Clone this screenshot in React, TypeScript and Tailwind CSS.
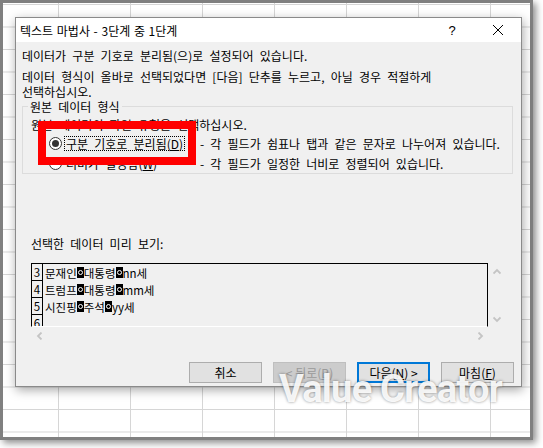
import React from 'react';

const KR = "font-['Noto_Sans_CJK_KR','Noto_Sans_CJK_SC',sans-serif]";

const ROWS: { n: string; parts: string[] }[] = [
  { n: '3', parts: ['문재인', '대통령', 'nn세'] },
  { n: '4', parts: ['트럼프', '대통령', 'mm세'] },
  { n: '5', parts: ['시진핑', '주석', 'yy세'] },
  { n: '6', parts: [] },
];

function Chevron({ dir }: { dir: 'up' | 'down' | 'left' | 'right' }) {
  const pts = {
    up: '0.5,5.5 4,2 7.5,5.5',
    down: '0.5,2.5 4,6 7.5,2.5',
    left: '5.5,0.5 2,4 5.5,7.5',
    right: '2.5,0.5 6,4 2.5,7.5',
  }[dir];
  return (
    <svg width="8" height="8" viewBox="0 0 8 8">
      <polyline points={pts} fill="none" stroke="#c4c4c4" strokeWidth="1.8" />
    </svg>
  );
}

// tab character shown as an inverse box
function Tab() {
  return (
    <span className="inline-flex items-center justify-center w-[7px] h-[11px] bg-black">
      <span className="w-[5px] h-[5px] rounded-full border border-white" />
    </span>
  );
}

function Radio({ checked }: { checked?: boolean }) {
  return (
    <span className="w-[13px] h-[13px] shrink-0 rounded-full border border-[#333333] bg-white flex items-center justify-center">
      {checked && <span className="w-[7px] h-[7px] rounded-full bg-[#333333]" />}
    </span>
  );
}

export default function App() {
  return (
    <div className={`relative w-[543px] h-[448px] overflow-hidden bg-white ${KR} text-[12px] leading-[15px] text-black`}>
      {/* spreadsheet behind the dialog */}
      <div className="w-[533px] h-[440px] border-[3px] border-[#808080] shadow-[3px_3px_7px_rgba(0,0,0,0.45)] bg-white [background-image:linear-gradient(to_right,#d6d6d6_1px,transparent_1px),linear-gradient(to_bottom,#d6d6d6_1px,transparent_1px)] [background-size:72px_22.5px] [background-position:55px_1px] pl-[12px] pt-[14px]">
        <div className="w-[507px] h-[370px] flex flex-col border border-[#8a8a8a] bg-[#f0f0f0] shadow-[1px_3px_10px_rgba(0,0,0,0.35)]">
          <div className="h-[24px] shrink-0 flex items-center bg-white">
            <span className="pl-[4px] flex-1 [word-spacing:1px]">텍스트 마법사 - 3단계 중 1단계</span>
            <span className="w-[46px] text-center text-[13px] font-['Liberation_Sans',sans-serif]">?</span>
            <span className="w-[46px] flex justify-center">
              <svg width="10" height="10" viewBox="0 0 10 10">
                <path d="M0 0L10 10M10 0L0 10" stroke="#000" strokeWidth="1" />
              </svg>
            </span>
          </div>

          <div className="flex-1 flex flex-col pl-[6px] pt-[6px] [word-spacing:3.5px]">
            <p>데이터가 구분 기호로 분리됨(으)로 설정되어 있습니다.</p>
            <p className="mt-[6px]">
              데이터 형식이 올바로 선택되었다면 [다음] 단추를 누르고, 아닐 경우 적절하게
              <br />
              선택하십시오.
            </p>

            <fieldset className="w-[491px] min-w-0 border border-[#dcdcdc]">
              <legend className="ml-[5px] px-[2px]">원본 데이터 형식</legend>
              <p className="mt-[3px] pl-[8px]">원본 데이터의 파일 유형을 선택하십시오.</p>
              <div className="mt-[1px] pl-[26px] flex flex-col">
                <div className="h-[20px] flex items-center">
                  <Radio checked />
                  <span className="w-[138px] shrink-0 pl-[2px]">
                    <span className="inline-block border border-dotted border-black px-[1px] leading-[13px]">
                      구분 기호로 분리됨(<span className="underline underline-offset-1">D</span>)
                    </span>
                  </span>
                  <span>- 각 필드가 쉼표나 탭과 같은 문자로 나누어져 있습니다.</span>
                </div>
                <div className="h-[20px] flex items-center">
                  <Radio />
                  <span className="w-[138px] shrink-0 pl-[2px]">
                    <span className="inline-block border border-transparent px-[1px] leading-[13px]">
                      너비가 일정함(<span className="underline underline-offset-1">W</span>)
                    </span>
                  </span>
                  <span>- 각 필드가 일정한 너비로 정렬되어 있습니다.</span>
                </div>
              </div>
            </fieldset>

            <p className="mt-[62px] pl-[9px]">선택한 데이터 미리 보기:</p>

            <div className="mt-[12px] ml-[9px] flex [word-spacing:0px]">
              <div className="flex flex-col">
                <div className="w-[457px] h-[64px] overflow-hidden border-t border-l border-r border-black border-b border-b-white text-[11.5px] leading-[16px]">
                  {ROWS.map(r => (
                    <div key={r.n} className="h-[17px] flex">
                      <div className="w-[11px] shrink-0 border-r border-b border-black text-center">{r.n}</div>
                      {r.parts.length > 0 && (
                        <div className="pl-[2px] flex items-center">
                          <span>{r.parts[0]}</span>
                          <Tab />
                          <span>{r.parts[1]}</span>
                          <Tab />
                          <span>{r.parts[2]}</span>
                        </div>
                      )}
                    </div>
                  ))}
                </div>
                <div className="h-[17px] flex justify-between">
                  <span className="w-[17px] flex items-center justify-center"><Chevron dir="left" /></span>
                  <span className="w-[17px] flex items-center justify-center"><Chevron dir="right" /></span>
                </div>
              </div>
              <div className="w-[17px] h-[64px] flex flex-col justify-between">
                <span className="h-[17px] flex items-center justify-center"><Chevron dir="up" /></span>
                <span className="h-[17px] flex items-center justify-center"><Chevron dir="down" /></span>
              </div>
            </div>

            <div className="mt-[18px] pr-[7px] flex justify-end gap-[11px] [word-spacing:1px]">
              <button className="w-[73px] h-[21px] border border-[#adadad] bg-[#e1e1e1] leading-[19px]">취소</button>
              <button className="w-[73px] h-[21px] border border-[#bfbfbf] bg-[#cccccc] text-[#9a9a9a] leading-[19px]">
                &lt; 뒤로(<span className="underline underline-offset-1">B</span>)
              </button>
              <button className="w-[73px] h-[21px] border-2 border-[#0078d7] bg-[#e1e1e1] leading-[17px]">
                다음(<span className="underline underline-offset-1">N</span>) &gt;
              </button>
              <button className="w-[73px] h-[21px] border border-[#adadad] bg-[#e1e1e1] leading-[19px]">
                마침(<span className="underline underline-offset-1">F</span>)
              </button>
            </div>
          </div>
        </div>
      </div>

      {/* annotation and watermark over the capture */}
      <div className="absolute left-[38px] top-[121px] w-[158px] h-[44px] border-[8px] border-[#ff0000]" />
      <div className="absolute left-[279px] top-[370px] font-['Roboto',sans-serif] font-bold text-[38px] leading-[38px] tracking-[-0.75px] text-white/90 [text-shadow:0_0_3px_rgba(0,0,0,0.45)] pointer-events-none">
        Value Creator
      </div>
    </div>
  );
}
